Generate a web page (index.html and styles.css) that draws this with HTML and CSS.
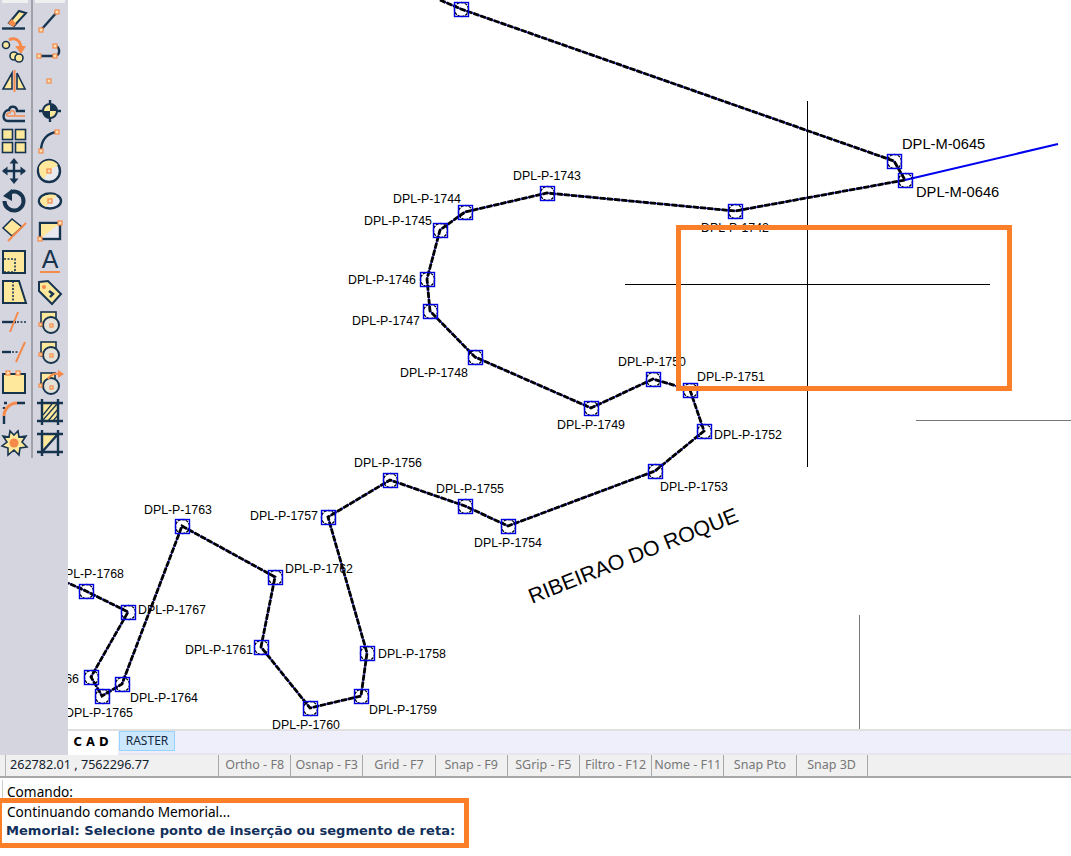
FILE: index.html
```html
<!DOCTYPE html>
<html lang="pt">
<head>
<meta charset="utf-8">
<title>CAD Memorial</title>
<link rel="stylesheet" href="styles.css">
</head>
<body>
<div class="app">
  <div class="main">
    <aside class="toolbar">
      <div class="tool-col first">
        <svg class="ic" viewBox="0 0 30 30"><polygon class="yn" points="9,18 19,6 26,8 14,21"/><polygon class="of" points="8,18 12,14 16,19 13,22"/><path class="n" d="M2 23.500H25"/></svg>
        <svg class="ic" viewBox="0 0 30 30"><circle class="yn1" cx="6" cy="10" r="3.500"/><path class="o3" d="M9 5C15 2 20 5 21 12"/><polygon class="of" points="15,11 26,11 21,19"/><circle class="yn1" cx="14" cy="21" r="4"/><circle class="yn1" cx="19" cy="23" r="4"/></svg>
        <svg class="ic" viewBox="0 0 30 30"><polygon class="yn1" points="3,24 12,8 12,24"/><polygon class="yn1" points="17,8 25,24 17,24"/><path class="o2" d="M14.500 5V27"/></svg>
        <svg class="ic" viewBox="0 0 30 30"><path class="n" d="M25 15H17C17 10 10 9 9 14C3 14 1 25 8 25H25"/><path class="o1" d="M25 20H10C5 20 6 17 10 17C11 13 15 14 15 19"/></svg>
        <svg class="ic" viewBox="0 0 30 30"><rect class="yn1" x="2.500" y="3.500" width="10" height="10"/><rect class="yn1" x="15.500" y="3.500" width="10" height="10"/><rect class="yn1" x="2.500" y="16.500" width="10" height="10"/><rect class="yn1" x="15.500" y="16.500" width="10" height="10"/></svg>
        <svg class="ic" viewBox="0 0 30 30"><path class="n" d="M14 5V25M3 15H25"/><polygon class="nf" points="14,2 18.500,7.500 9.500,7.500"/><polygon class="nf" points="14,28 18.500,22.500 9.500,22.500"/><polygon class="nf" points="2,15 7.500,10.500 7.500,19.500"/><polygon class="nf" points="26,15 20.500,10.500 20.500,19.500"/></svg>
        <svg class="ic" viewBox="0 0 30 30"><path class="n3" d="M11 6A9.500 9.500 0 1 1 4.500 15"/><polygon class="nf" points="3,10 12,3 12,15"/></svg>
        <svg class="ic" viewBox="0 0 30 30"><polygon class="yn1" points="3,12 12,3 22,11 12,20"/><path class="o2" d="M8 25L26 7"/></svg>
        <svg class="ic" viewBox="0 0 30 30"><rect class="yn" x="3" y="4" width="22" height="22"/><path class="d" d="M4 12H15V25M4 25H15"/></svg>
        <svg class="ic" viewBox="0 0 30 30"><polygon class="yn" points="3,4 19,4 26,26 3,26"/><path class="d" d="M13 4V26"/></svg>
        <svg class="ic" viewBox="0 0 30 30"><path class="n" d="M2 15H16"/><path class="d" d="M17 15H26"/><path class="o2" d="M10 25L18 5"/></svg>
        <svg class="ic" viewBox="0 0 30 30"><path class="n" d="M2 15H11"/><path class="d" d="M12 15H18"/><path class="o2" d="M16 25L25 5"/></svg>
        <svg class="ic" viewBox="0 0 30 30"><rect class="yn" x="3" y="7" width="22" height="19"/><rect class="hd" x="6" y="4" width="4" height="4"/><rect class="hd" x="16" y="4" width="4" height="4"/></svg>
        <svg class="ic" viewBox="0 0 30 30"><path class="n" d="M4 27V19M17 6H25M4 6H7M4 10V12"/><path class="o3" d="M4 19C4 12 10 6 17 6"/></svg>
        <svg class="ic" viewBox="0 0 30 30"><polygon class="yn1" points="14,7 18,3 19,9 26,8 22,14 27,19 20,20 19,27 14,22 8,27 8,20 2,18 7,14 3,8 9,9 10,3"/><circle class="of" cx="14" cy="15" r="4.500"/></svg>
      </div>
      <div class="tool-col">
        <svg class="ic" viewBox="0 0 30 30"><path class="n" d="M6 25L22 7"/><rect class="hd" x="4" y="23" width="4" height="4"/><rect class="hd" x="20" y="5" width="4" height="4"/></svg>
        <svg class="ic" viewBox="0 0 30 30"><path class="n" d="M4 21H20M20 11C25 11 26 20 20 21"/><rect class="hd" x="2" y="19" width="4" height="4"/><rect class="hd" x="18" y="19" width="4" height="4"/><rect class="hd" x="18" y="9" width="4" height="4"/></svg>
        <svg class="ic" viewBox="0 0 30 30"><rect class="hd" x="12" y="14" width="4" height="4"/></svg>
        <svg class="ic" viewBox="0 0 30 30"><path class="n" d="M15 4V26M4 15H26"/><circle class="yn" cx="15" cy="15" r="7"/><path class="nf" d="M15 15V8A7 7 0 0 1 22 15ZM15 15V22A7 7 0 0 1 8 15Z"/></svg>
        <svg class="ic" viewBox="0 0 30 30"><path class="n" d="M6 25C6 14 12 7 22 6"/><rect class="hd" x="4" y="23" width="4" height="4"/><rect class="hd" x="20" y="4" width="4" height="4"/></svg>
        <svg class="ic" viewBox="0 0 30 30"><circle class="wn" cx="14" cy="15" r="11"/><path class="yf" d="M14 15L23 9A11 11 0 0 0 4 11C4 15 5 20 9 23Z"/><rect class="hd" x="12" y="13" width="4" height="4"/></svg>
        <svg class="ic" viewBox="0 0 30 30"><ellipse class="wn" cx="15" cy="15" rx="11" ry="7.500"/><path class="yf" d="M15 15L22 10C17 7 6 9 5 15C6 18 8 20 11 21Z"/><rect class="hd" x="13" y="13" width="4" height="4"/></svg>
        <svg class="ic" viewBox="0 0 30 30"><rect class="wn" x="5" y="7" width="20" height="16"/><polygon class="yf" points="6,8 24,8 6,22"/><rect class="hd" x="3" y="21" width="4" height="4"/><rect class="hd" x="23" y="5" width="4" height="4"/></svg>
        <svg class="ic" viewBox="0 0 30 30"><text class="glyph" x="15" y="21">A</text><path class="o2" d="M5 25H25"/></svg>
        <svg class="ic" viewBox="0 0 30 30"><polygon class="yn" points="4,5 13,4 26,17 17,27 4,14"/><circle class="of" cx="9" cy="10" r="2"/><path class="n" d="M14 14L18 17L15 20"/></svg>
        <svg class="ic" viewBox="0 0 30 30"><rect class="yn1" x="6" y="5" width="15" height="14"/><circle class="wn1" cx="16" cy="18" r="8"/><rect class="hd" x="4" y="16" width="3" height="3"/><rect class="hd" x="15" y="17" width="3" height="3"/></svg>
        <svg class="ic" viewBox="0 0 30 30"><rect class="yn1" x="6" y="5" width="15" height="14"/><circle class="wn1" cx="16" cy="18" r="8"/><rect class="hd" x="4" y="16" width="3" height="3"/><rect class="hd" x="15" y="17" width="3" height="3"/></svg>
        <svg class="ic" viewBox="0 0 30 30"><rect class="yn1" x="6" y="6" width="14" height="13"/><circle class="wn1" cx="16" cy="19" r="8"/><path class="o2" d="M13 12C16 7 20 6 24 7"/><polygon class="of" points="23,3 29,7 23,11"/><rect class="hd" x="4" y="17" width="3" height="3"/><rect class="hd" x="15" y="19" width="3" height="3"/></svg>
        <svg class="ic" viewBox="0 0 30 30"><rect class="yf" x="7" y="6" width="16" height="18"/><path class="hatch" d="M8 18L17 7M8 23L22 7M13 24L23 12M18 24L23 18"/><path class="n" d="M7 2V28M23 2V28M2 6H28M2 24H28"/></svg>
        <svg class="ic" viewBox="0 0 30 30"><polygon class="yf" points="7,6 23,6 7,24"/><path class="n" d="M7 2V28M23 2V28M2 6H28M2 24H28M7 24L23 6"/></svg>
      </div>
    </aside>
    <div class="canvas">
      <svg class="drawing" viewBox="68 0 1003 729">
        <defs>
          <g id="node"><circle class="ring" r="7"/><rect class="box" x="-7" y="-7" width="14" height="14"/></g>
        </defs>
        <line class="cross" x1="807.500" y1="101" x2="807.500" y2="467"/>
        <line class="cross" x1="625" y1="284.500" x2="990" y2="284.500"/>
        <line class="faint" x1="916" y1="420.500" x2="1071" y2="420.500"/>
        <line class="faint" x1="859.500" y1="615" x2="859.500" y2="729"/>

        <path class="wire-under" d="M440 0L461 9L894 161L905 180L735 211L547 193L465 212L440 230L427 279L430 311L475 357L591 408L653 379L690 390L704 431L655 471L508 526L465 506L390 480L328 517L367 653L361 696L310 708L261 647L275 577L182 526L122 684L102 696L91 677L128 612L86 591L68 583"/>
        <path class="wire" d="M440 0L461 9L894 161L905 180L735 211L547 193L465 212L440 230L427 279L430 311L475 357L591 408L653 379L690 390L704 431L655 471L508 526L465 506L390 480L328 517L367 653L361 696L310 708L261 647L275 577L182 526L122 684L102 696L91 677L128 612L86 591L68 583"/>
        <path class="wire-blue" d="M905 180L1058 144"/>

        <use href="#node" x="461.500" y="9.500"/><use href="#node" x="894.500" y="161.500"/><use href="#node" x="905.500" y="180.500"/>
        <use href="#node" x="735.500" y="211.500"/><use href="#node" x="547.500" y="193.500"/><use href="#node" x="465.500" y="212.500"/>
        <use href="#node" x="440.500" y="230.500"/><use href="#node" x="427.500" y="279.500"/><use href="#node" x="430.500" y="311.500"/>
        <use href="#node" x="475.500" y="357.500"/><use href="#node" x="591.500" y="408.500"/><use href="#node" x="653.500" y="379.500"/>
        <use href="#node" x="690.500" y="390.500"/><use href="#node" x="704.500" y="431.500"/><use href="#node" x="655.500" y="471.500"/>
        <use href="#node" x="508.500" y="526.500"/><use href="#node" x="465.500" y="506.500"/><use href="#node" x="390.500" y="480.500"/>
        <use href="#node" x="328.500" y="517.500"/><use href="#node" x="367.500" y="653.500"/><use href="#node" x="361.500" y="696.500"/>
        <use href="#node" x="310.500" y="708.500"/><use href="#node" x="261.500" y="647.500"/><use href="#node" x="275.500" y="577.500"/>
        <use href="#node" x="182.500" y="526.500"/><use href="#node" x="122.500" y="684.500"/><use href="#node" x="102.500" y="696.500"/>
        <use href="#node" x="91.500" y="677.500"/><use href="#node" x="128.500" y="612.500"/><use href="#node" x="86.500" y="591.500"/>

        <text class="lbl big" x="902" y="149">DPL-M-0645</text>
        <text class="lbl big" x="916" y="197">DPL-M-0646</text>
        <text class="lbl" x="701" y="232">DPL-P-1742</text>
        <text class="lbl" x="513" y="180">DPL-P-1743</text>
        <text class="lbl" x="393" y="203">DPL-P-1744</text>
        <text class="lbl" x="364" y="225">DPL-P-1745</text>
        <text class="lbl" x="348" y="284">DPL-P-1746</text>
        <text class="lbl" x="352" y="325">DPL-P-1747</text>
        <text class="lbl" x="400" y="377">DPL-P-1748</text>
        <text class="lbl" x="557" y="429">DPL-P-1749</text>
        <text class="lbl" x="618" y="366">DPL-P-1750</text>
        <text class="lbl" x="697" y="381">DPL-P-1751</text>
        <text class="lbl" x="714" y="439">DPL-P-1752</text>
        <text class="lbl" x="660" y="491">DPL-P-1753</text>
        <text class="lbl" x="474" y="547">DPL-P-1754</text>
        <text class="lbl" x="436" y="493">DPL-P-1755</text>
        <text class="lbl" x="354" y="467">DPL-P-1756</text>
        <text class="lbl" x="250" y="520">DPL-P-1757</text>
        <text class="lbl" x="378" y="658">DPL-P-1758</text>
        <text class="lbl" x="369" y="714">DPL-P-1759</text>
        <text class="lbl" x="272" y="729">DPL-P-1760</text>
        <text class="lbl" x="185" y="654">DPL-P-1761</text>
        <text class="lbl" x="285" y="573">DPL-P-1762</text>
        <text class="lbl" x="144" y="514">DPL-P-1763</text>
        <text class="lbl" x="130" y="702">DPL-P-1764</text>
        <text class="lbl" x="65" y="717">DPL-P-1765</text>
        <text class="lbl" x="11" y="683">DPL-P-1766</text>
        <text class="lbl" x="56" y="578">DPL-P-1768</text>
        <text class="lbl" x="138" y="614">DPL-P-1767</text>
        <text class="river" transform="translate(532 604) rotate(-21.800)">RIBEIRAO DO ROQUE</text>

        <rect class="callout" x="678.500" y="227.500" width="331" height="161"/>
      </svg>
    </div>
  </div>
  <div class="tabs">
    <div class="tab-gutter"></div>
    <div class="tab active">C A D</div>
    <div class="tab raster">RASTER</div>
  </div>
  <div class="status">
    <div class="coords">262782.01 , 7562296.77</div>
    <div class="sbtn">Ortho - F8</div>
    <div class="sbtn">Osnap - F3</div>
    <div class="sbtn">Grid - F7</div>
    <div class="sbtn">Snap - F9</div>
    <div class="sbtn">SGrip - F5</div>
    <div class="sbtn">Filtro - F12</div>
    <div class="sbtn">Nome - F11</div>
    <div class="sbtn">Snap Pto</div>
    <div class="sbtn">Snap 3D</div>
  </div>
  <div class="command">
    <div class="line">Comando:</div>
    <div class="line">Continuando comando Memorial...</div>
    <div class="line strong">Memorial: Selecione ponto de inserção ou segmento de reta:</div>
    <div class="cmd-callout"></div>
  </div>
</div>
</body>
</html>
```
FILE: styles.css
```css
* { box-sizing: border-box; }
html, body { margin: 0; padding: 0; background: #fff; }
body { width: 1071px; height: 856px; overflow: hidden; font-family: "Noto Sans", Tahoma, sans-serif; }
.app { display: flex; flex-direction: column; height: 856px; }
.main { display: flex; height: 729px; flex: none; }

.toolbar { width: 68px; flex: none; display: flex; align-items: flex-start; background: #d5d5e0; }
.tool-col { position: relative; width: 35px; height: 458px; padding-top: 5px; display: flex; flex-direction: column; gap: 0.2px; }
.tool-col::before { content: ""; position: absolute; left: 2px; right: 3px; top: 0; height: 3px; background: #f0f0f0; }
.tool-col.first { width: 33px; border-right: 2px solid #a0a0a8; }
.tool-col .ic { display: block; width: 30px; height: 30px; flex: none; }
.tool-col:not(.first) .ic { margin-left: 2px; }

.ic .n { fill: none; stroke: #17344f; stroke-width: 2.400; }
.ic .n3 { fill: none; stroke: #17344f; stroke-width: 4; }
.ic .nf { fill: #17344f; stroke: none; }
.ic .yn { fill: #fde89c; stroke: #17344f; stroke-width: 2; }
.ic .yn1 { fill: #fde89c; stroke: #17344f; stroke-width: 1.600; }
.ic .yf { fill: #fde89c; stroke: none; }
.ic .wn { fill: #e9e9f0; stroke: #17344f; stroke-width: 2.400; }
.ic .wn1 { fill: #e4e2d8; stroke: #17344f; stroke-width: 2; }
.ic .of { fill: #f58a4b; stroke: none; }
.ic .o1 { fill: none; stroke: #f58a4b; stroke-width: 1.400; }
.ic .o2 { fill: none; stroke: #f58a4b; stroke-width: 2; }
.ic .o3 { fill: none; stroke: #f58a4b; stroke-width: 3; }
.ic .hd { fill: #fde0b0; stroke: #f58a4b; stroke-width: 1.200; }
.ic .d { fill: none; stroke: #17344f; stroke-width: 1.600; stroke-dasharray: 2 1.500; }
.ic .hatch { fill: none; stroke: #17344f; stroke-width: 1.200; }
.ic .glyph { font-family: "Liberation Sans", sans-serif; font-size: 25px; fill: #17344f; text-anchor: middle; }

.canvas { flex: 1; min-width: 0; background: #fff; overflow: hidden; }
.drawing { display: block; width: 1003px; height: 729px; }
.cross { stroke: #000; stroke-width: 1; }
.faint { stroke: #777; stroke-width: 1; }
.wire-under { fill: none; stroke: #1a1ad0; stroke-width: 1.500; }
.wire { fill: none; stroke: #000; stroke-width: 2.800; stroke-dasharray: 6 1.200; }
.wire-blue { fill: none; stroke: #0000f0; stroke-width: 2; }
.ring { fill: none; stroke: #000; stroke-width: 1.300; stroke-dasharray: 3 1; }
.box { fill: none; stroke: #0000e6; stroke-width: 1.400; }
.lbl { font-family: "Liberation Sans", Arial, sans-serif; font-size: 12.350px; fill: #000; }
.lbl.big { font-size: 14.700px; }
.river { font-family: "Liberation Sans", Arial, sans-serif; font-size: 21.300px; fill: #000; }
.callout { fill: none; stroke: #fb7f28; stroke-width: 5; }

.tabs { display: flex; height: 26px; flex: none; background: #efeffb; border-top: 2px solid #e0e0e0; border-bottom: 2px solid #e6e6ee; }
.tab-gutter { width: 68px; background: #d5d5e0; margin-top: -2px; margin-bottom: -2px; }
.tab { font-size: 12px; line-height: 20px; height: 20px; }
.tab.active { width: 50px; height: 24px; padding-right: 4px; background: #fff; color: #000; font-weight: 700; font-family: "DejaVu Sans", sans-serif; font-size: 11.500px; line-height: 22px; text-align: center; }
.tab.raster { width: 56px; margin-left: 1px; background: #cce8ff; border: 1px solid #99d1ff; color: #14263a; text-align: center; line-height: 18px; }

.status { display: flex; height: 23px; flex: none; background: #f0f0f0; border-bottom: 2px solid #a8a8a8; padding-left: 5px; }
.coords { width: 213px; border-left: 1px solid #b5b5b5; padding-left: 4px; font-size: 12.600px; line-height: 20px; color: #14202c; white-space: nowrap; }
.sbtn { width: 72.200px; border-left: 1px solid #a8a8a8; text-align: center; font-size: 12.500px; line-height: 20px; color: #777; white-space: nowrap; }
.sbtn:last-child { border-right: 1px solid #a8a8a8; }

.command { position: relative; flex: 1; padding: 4px 0 0 7px; background: #fff; font-size: 13.650px; }
.command::before { content: ""; position: absolute; left: 2px; top: 2px; height: 20px; border-left: 1px solid #ccc; }
.line { height: 20px; line-height: 20px; color: #000; white-space: nowrap; }
.line.strong { font-weight: 700; font-family: "DejaVu Sans", sans-serif; font-size: 13.050px; color: #12305a; margin-left: -1px; margin-top: -1px; }
.cmd-callout { position: absolute; left: -3px; top: 20px; width: 472px; height: 50px; border: 5px solid #fb7f28; }
```
